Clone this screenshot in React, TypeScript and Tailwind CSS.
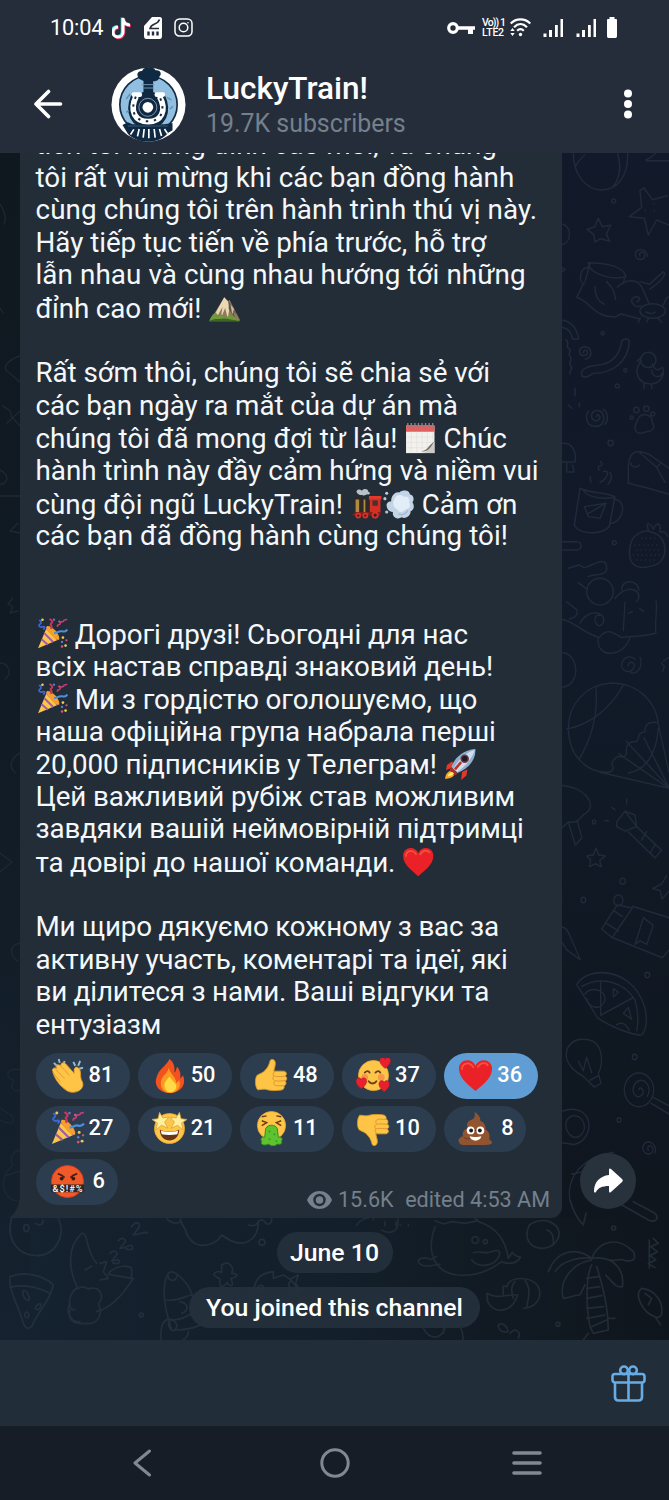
import type { ReactNode } from "react";

type EmojiName =
  | "mountain" | "calendar" | "train" | "wind" | "party" | "rocket" | "heart" | "clap" | "fire"
  | "up" | "down" | "love" | "star" | "sick" | "poop" | "angry";

const thumb = (
  <g stroke="#d99a2b" strokeWidth="0.9" strokeLinejoin="round">
    <path d="M3 18c2-2 6-2 9-6 3-3 4-7 4.500-9 .6-2.500 5-2 5.400 1.500.3 3-1 6-1.600 9H30c4 0 4 4 2 5 2.500 1.300 2 4.500 0 5.200 1.600 1.600 1 4.400-1.200 5 .8 2-.5 4-3 4.300-5 .7-11 .7-15-.6-3-1-6 .3-9 .3C.8 29 1 21 3 18z" fill="#fdc445" />
    <path d="M22 14c-2 .5-3 2-2 4 1 1.500 9 1.200 12 .6M20.500 18.500c-2 1.500-1 4.700 1 5 3 .4 8 .3 11-.5M21 24c-1.300 1.500-.6 3.700 1 4.200 2.500.6 6 .5 9 0" fill="none" stroke="#d9912a" />
  </g>
);

const face = <circle cx="18" cy="18" r="15.500" fill="#fdc649" stroke="#eda52e" strokeWidth="0.8" />;
const tinyHeart = "M0 5C-7 0-5-5-2-5-.8-5 0-4 0-3 0-4 .8-5 2-5 5-5 7 0 0 5z";
const starPath = "M0-7 2-2 7-2 3 1.500 5 7 0 3.800-5 7-3 1.500-7-2-2-2z";

const art: Record<EmojiName, ReactNode> = {
  mountain: (
    <>
      <path d="M2 32 18 6l3 5 3-2 12 23z" fill="#8d7a5c" />
      <path d="M18 6 8 24l3 2 5-9-2 13 5-12 3 12 2-13-2-7z" fill="#e9d8b2" />
      <path d="m23 10 9 15-4-3 2 7-7-10z" fill="#5c564c" />
      <path d="m25 14 2 11 2-6z" fill="#d4bd92" />
      <path d="M1 33c2-6 5-9 8-10l1 5 5-3 3 4 7-3 4 2 7 5z" fill="#6f9a3a" />
      <path d="M1 33c5-4 10-2 14-3s12 1 21 3z" fill="#3f6427" />
    </>
  ),
  calendar: (
    <>
      <path d="M2 4h32v31H2z" fill="#f3f1ee" />
      <path d="M2 4h32v7H2z" fill="#e0605f" />
      <path d="M4 1v5M8 1v5M12 1v5M16 1v5M20 1v5M24 1v5M28 1v5M32 1v5" stroke="#8e8485" strokeWidth="1.500" />
      <path d="M2 17h32M2 23h32M2 29h24M8 11v24M14 11v24M20 11v24M26 11v18M32 11v13" stroke="#e2dedb" strokeWidth="0.700" />
      <path d="M18 35c7 0 11-5 16-12v12z" fill="#cdcac6" />
      <path d="M19 33c8-1 7-6 15-11-5 8-7 12-15 11z" fill="#77736f" />
    </>
  ),
  train: (
    <>
      <path d="M8 6c-3-3 2-6 5-3 2-3 8-2 7 1 3 1 3 4-1 3-3 2-9 2-11-1z" fill="#b9c0c7" />
      <path d="M7 8h7v6H7z" fill="#2d2b29" />
      <path d="M4 13h19v15H4z" fill="#2b2a28" />
      <path d="M6 13h4v15H6zM15 13h2v15h-2z" fill="#b28b42" />
      <path d="M21 9h14v4H21z" fill="#e23a2c" />
      <path d="M22 12h12v16H22z" fill="#d52f25" />
      <path d="M25 14h6v6h-6z" fill="#453032" />
      <path d="m1 31 5-4h28v4z" fill="#7e211d" />
      <circle cx="9" cy="31" r="3.300" fill="#d83027" /><circle cx="17" cy="31" r="3.300" fill="#d83027" /><circle cx="28" cy="30.500" r="4" fill="#d83027" />
      <circle cx="9" cy="31" r="1.300" fill="#401c1c" /><circle cx="17" cy="31" r="1.300" fill="#401c1c" /><circle cx="28" cy="30.500" r="1.800" fill="#401c1c" />
    </>
  ),
  wind: (
    <>
      <path d="M5 18c3-4 4-2 5-3 0-7 5-11 9-10 5-4 12-2 12 2 5 1 5 7 3 9 3 5 1 9-2 10 0 6-6 9-10 7-5 3-11 0-10-6-4 0-8-4-7-9z" fill="#c3d4e7" />
      <path d="M14 12c2-5 8-5 10-2 5-2 8 3 6 6 3 4 0 8-4 8-2 4-8 4-9 0-5-2-6-8-3-12z" fill="#e3edf7" />
      <path d="M18 29c3 2 9 1 11-4" stroke="#a4b8cf" strokeWidth="1.300" fill="none" />
      <circle cx="3" cy="12" r="1.800" fill="#b2c5db" /><circle cx="5" cy="6" r="1.700" fill="#c1d1e3" /><circle cx="5" cy="27" r="1.800" fill="#b2c5db" />
    </>
  ),
  party: (
    <>
      <path d="M2 34 12 10c4 0 13 8 14 14z" fill="#fbc64a" />
      <path d="m9 17 10 10M6 24l7 6M11.500 11 24 24.500" stroke="#a15aa8" strokeWidth="2.200" />
      <path d="M12 9c5-1 14 8 14 14-2 3-6 0-9-4s-7-7-5-10z" fill="#f6a029" />
      <path d="M3 3c3-1 3 3 1 4s0 4 3 3 3 1 1 3" stroke="#3868d3" strokeWidth="2" fill="none" />
      <path d="M20 17c5 0 5-3 9-2s5-1 6-2" stroke="#4c8ee3" strokeWidth="2.300" fill="none" />
      <path d="M24 10c-1-4 3-1 3-4s4-1 4-3 4 0 3-2" stroke="#c33e77" strokeWidth="1.800" fill="none" />
      <path d="M16 12c4-3-2-4 1-6s-1-4-2-5" stroke="#c6375d" strokeWidth="2.200" fill="none" />
      <g fill="#f4c94b"><circle cx="7" cy="2" r="1.500" /><circle cx="30" cy="22" r="1.500" /><circle cx="33" cy="31" r="1.500" /></g>
      <g fill="#df547d"><circle cx="26" cy="4" r="1.300" /><circle cx="29" cy="32" r="1.400" /><circle cx="34" cy="25" r="1.200" /></g>
      <g fill="#5d7bd8"><circle cx="20" cy="2" r="1.300" /><circle cx="29" cy="27" r="1.300" /></g>
    </>
  ),
  rocket: (
    <>
      <path d="m9 15-6 4-1 6 9-4zM20 27l-1 9 6-5 1-7z" fill="#de392b" />
      <path d="M9 25c-6 1-8 6-8 10 4-1 9-1 11-6z" fill="#f6a72c" />
      <path d="M8 22c2-9 12-20 27-21 1 13-9 23-20 27z" fill="#8fb0d0" />
      <path d="M10 23C16 14 23 6 34 2c0 5-9 18-19 25z" fill="#cfdeec" />
      <path d="m8 21 7 8-4 2-5-6z" fill="#b42c27" />
      <circle cx="23" cy="12" r="4.800" fill="#7b3138" /><circle cx="23" cy="12" r="3" fill="#191b2c" />
      <path d="m12 24 7-8" stroke="#b53633" strokeWidth="3" />
      <path d="M4 32c1-4 4-5 5-5l2 2c-2 2-4 2-7 3z" fill="#fff077" />
    </>
  ),
  heart: (
    <>
      <path d="M18 34C13 29 1 22 1 11 1 1 14-1 18 8c4-9 17-7 17 3 0 11-12 18-17 23z" fill="#ea2227" />
      <path d="M4 12c0-7 8-9 12-2M20 10c3-6 9-6 11-2" stroke="#f7523f" strokeWidth="1.800" fill="none" />
    </>
  ),
  clap: (
    <>
      <path d="M4 5 7 8M9 1l1 4M15 3l-1 4M24 4l2 4M31 3l-2 5M34 10l-4 1" stroke="#9ab9ce" strokeWidth="2" />
      <path d="M3 14c-2-3 2-5 4-3-2-4 1-5 4-3 0-4 4-4 6-1l8 9c-1-5 1-8 4-6 4 3 1 9 4 14 4 8-7 14-15 10C11 30 4 21 3 14z" fill="#fdc445" stroke="#e39a2b" strokeWidth="0.900" />
      <path d="m6 12 9 9M11 8l9 10M3 15l8 10" stroke="#e39d32" fill="none" strokeWidth="1" />
    </>
  ),
  fire: (
    <>
      <path d="M18 1c-4 8-10 9-13 18-4 10 4 17 13 17s18-6 14-18c-2 2-3 3-3 3 1-6-1-9-3-12-2 3-1 5-3 6 1-6-1-11-5-14z" fill="#f4511e" />
      <path d="M17 10c0 6-8 8-8 16 0 7 5 10 10 10s12-4 9-13l-3 3c0-6-5-8-8-16z" fill="#fb9c20" />
      <path d="M18 19c-3 4-6 6-5 11 2 8 12 6 12-1 0-3-3-4-7-10z" fill="#ffdc45" />
    </>
  ),
  up: thumb,
  down: <g transform="matrix(1 0 0 -1 0 37)">{thumb}</g>,
  love: (
    <>
      {face}
      <path d="M9 15c2-2 4-2 5 0M20 15c2-2 4-2 5 0M13 24c2 3 6 3 8 0" stroke="#694018" strokeWidth="1.900" fill="none" strokeLinecap="round" />
      <circle cx="9" cy="20" r="3.500" fill="#f38647" opacity=".75" /><circle cx="26" cy="20" r="3.500" fill="#f38647" opacity=".75" />
      <g fill="#e71f2e" stroke="#ad1622" strokeWidth=".4">
        <path d={tinyHeart} transform="translate(30 5) scale(1.150)" /><path d={tinyHeart} transform="translate(5.500 26) scale(1.150)" /><path d={tinyHeart} transform="translate(29 29) scale(1.150)" />
      </g>
    </>
  ),
  star: (
    <>
      {face}
      <path d="M8 19c5 3 15 3 20 0 0 15-20 15-20 0z" fill="#663516" />
      <path d="M9 20c5 2 13 2 18 0l-1 4c-5 1-11 1-16 0z" fill="#fff" />
      <g fill="#ffee9c" stroke="#dfa02e" strokeWidth=".6">
        <path d={starPath} transform="translate(9 10) rotate(-8) scale(1.250)" /><path d={starPath} transform="translate(27 10) rotate(8) scale(1.250)" />
      </g>
    </>
  ),
  sick: (
    <>
      <circle cx="18" cy="15" r="14.500" fill="#fdc649" stroke="#eda52e" strokeWidth="0.800" />
      <path d="m8 10 5 2-5 3M28 10l-5 2 5 3M8 6l5-1M28 6l-5-1" stroke="#693c16" strokeWidth="1.500" fill="none" />
      <path d="M12 18c3-5 10-4 12 0l1 9c4-1 5 3 3 4 2 2-1 4-4 3-3 3-7 2-9 0-4 2-9 1-7-3-2-2 0-5 3-4z" fill="#5fc32f" stroke="#2f8a28" strokeWidth="1" />
      <g fill="#2f9928"><circle cx="16" cy="21" r="1" /><circle cx="21" cy="24" r="1" /><circle cx="16" cy="29" r="1" /><circle cx="23" cy="31" r="1" /></g>
    </>
  ),
  poop: (
    <>
      <path d="M17 1c5 3 6 6 6 9 5 2 6 7 5 9 5 2 5 8 4 10 6 4 2 6-3 6H6c-6 0-8-7-1-9-1-4 2-8 5-8-2-6 1-8 4-9 3-1 4-4 3-8z" fill="#925331" />
      <path d="M11 18c5 3 11 3 15-1M6 27c2 2 5 2 7 1" stroke="#6b3824" strokeWidth="1" fill="none" />
      <circle cx="13" cy="20" r="4" fill="#fff" /><circle cx="23" cy="20" r="4" fill="#fff" />
      <circle cx="13.500" cy="20" r="2" fill="#221c1c" /><circle cx="22.500" cy="20" r="2" fill="#221c1c" />
      <path d="M12 26c3 1 9 1 12 0-1 6-11 6-12 0z" fill="#fff" />
    </>
  ),
  angry: (
    <>
      <circle cx="18" cy="18" r="16.500" fill="#f05a28" stroke="#d83e1e" />
      <path d="M8 10c3 1 5 2 7 4M28 10c-3 1-5 2-7 4" stroke="#4b2019" strokeWidth="1.900" />
      <circle cx="12" cy="15" r="2" fill="#381f19" /><circle cx="24" cy="15" r="2" fill="#381f19" />
      <path d="M1 21h34v8H1z" fill="#2e2524" />
      <text x="18" y="28.300" textAnchor="middle" fontSize="9.500" fontWeight="500" fill="#fff" textLength="31" fontFamily="Roboto, sans-serif">&amp;$!#%</text>
    </>
  ),
};

function Emoji({ name, className }: { name: EmojiName; className: string }) {
  return <svg viewBox="0 0 36 36" className={className} aria-hidden="true">{art[name]}</svg>;
}

function InlineEmoji({ name }: { name: EmojiName }) {
  return <Emoji name={name} className="inline-block h-[32px] w-[32.500px] shrink-0 align-[-6px]" />;
}

const lines: { text: ReactNode; tracking?: string }[] = [
  { text: "tiến tới những đỉnh cao mới, và chúng" },
  { text: "tôi rất vui mừng khi các bạn đồng hành" },
  { text: "cùng chúng tôi trên hành trình thú vị này.", tracking: "tracking-[0.080px]" },
  { text: "Hãy tiếp tục tiến về phía trước, hỗ trợ", tracking: "tracking-[-0.040px]" },
  { text: "lẫn nhau và cùng nhau hướng tới những", tracking: "tracking-[0.090px]" },
  { text: <>đỉnh cao mới! <InlineEmoji name="mountain" /></>, tracking: "tracking-[-0.150px]" },
  { text: "" },
  { text: "Rất sớm thôi, chúng tôi sẽ chia sẻ với", tracking: "tracking-[-0.070px]" },
  { text: "các bạn ngày ra mắt của dự án mà", tracking: "tracking-[-0.080px]" },
  { text: <>chúng tôi đã mong đợi từ lâu! <InlineEmoji name="calendar" /> Chúc</> },
  { text: "hành trình này đầy cảm hứng và niềm vui" },
  { text: <>cùng đội ngũ LuckyTrain! <InlineEmoji name="train" /><InlineEmoji name="wind" /> Cảm ơn</> },
  { text: "các bạn đã đồng hành cùng chúng tôi!", tracking: "tracking-[0.060px]" },
  { text: "" },
  { text: "" },
  { text: <><InlineEmoji name="party" /> Дорогі друзі! Сьогодні для нас</>, tracking: "tracking-[-0.110px]" },
  { text: "всіх настав справді знаковий день!", tracking: "tracking-[-0.160px]" },
  { text: <><InlineEmoji name="party" /> Ми з гордістю оголошуємо, що</>, tracking: "tracking-[-0.080px]" },
  { text: "наша офіційна група набрала перші", tracking: "tracking-[-0.140px]" },
  { text: <>20,000 підписників у Телеграм! <InlineEmoji name="rocket" /></>, tracking: "tracking-[-0.080px]" },
  { text: "Цей важливий рубіж став можливим", tracking: "tracking-[-0.140px]" },
  { text: "завдяки вашій неймовірній підтримці", tracking: "tracking-[-0.160px]" },
  { text: <>та довірі до нашої команди. <InlineEmoji name="heart" /></>, tracking: "tracking-[-0.200px]" },
  { text: "" },
  { text: "Ми щиро дякуємо кожному з вас за", tracking: "tracking-[-0.200px]" },
  { text: "активну участь, коментарі та ідеї, які", tracking: "tracking-[-0.200px]" },
  { text: "ви ділитеся з нами. Ваші відгуки та", tracking: "tracking-[-0.190px]" },
  { text: "ентузіазм", tracking: "tracking-[-0.300px]" },
];

const reactions: { name: EmojiName; count: number; chosen?: boolean }[] = [
  { name: "clap", count: 81 }, { name: "fire", count: 50 }, { name: "up", count: 48 },
  { name: "love", count: 37 }, { name: "heart", count: 36, chosen: true },
  { name: "party", count: 27 }, { name: "star", count: 21 }, { name: "sick", count: 11 },
  { name: "down", count: 10 }, { name: "poop", count: 8 }, { name: "angry", count: 6 },
];

function Wallpaper() {
  return (
    <svg className="absolute inset-0 h-full w-full" viewBox="0 0 669 1187" fill="none" stroke="#202a3a" strokeLinecap="round" strokeLinejoin="round" aria-hidden="true">
      <g transform="translate(540 -3) scale(.3333)" strokeWidth="4.500">
        <path d="M100 10c0 60 35 110 85 110s80-45 78-110M105 50c10-15 15-25 30-35M218 112c25-30 25-70 15-100M318 30c15-5 20-12 30-22M318 32h69" />
        <path d="m300 122 12-8 25 35 45-12M300 122l5 50-37 28 45 5 12 50 25-45 37 15M316 180v2M343 182v2M342 160v1" />
        <path d="m175 205 12 25 25-5-13 27 10 22-27-8-17 10-4-23-20-15 23-7zM66 222c30 5 30 55 0 62M66 352l9 6-9 7" />
        <path d="M300 318c-5-10 10-18 14-5 4 18-25 22-28 2 0-24 35-22 36 4M145 338c50 0 105 10 113 42-50 15-115-15-113-42zM150 340l-15 55M255 380l-5 20M143 352c-27 5-27 45-10 50M130 402l-20 40c40 10 55 65 118 58l15-8 57 15M165 410c0 30 10 45 28 53M200 395c25 25 22 35 27 53M232 412c25-25 65-30 78 10l18 40M300 395l28 8 42-38c10 5 0 25-40 52" />
        <ellipse cx="338" cy="483" rx="38" ry="22" /><path d="M318 486c10 6 20 6 28 0M300 505l-5 12M325 506l-5 10M355 505l10 12M303 468c-25 10-40-25-15-28 15 0 13 12 3 16M370 466c8-20 10-25 17-25" />
        <path d="M66 510c30 5 45 25 50 57h-18c-5-20-10-30-32-35M78 570c15 8-5 18 8 25s-6 14 4 24-8 18 2 28-8 16-2 26M105 715v22M85 765l10 10M118 760v10" />
        <path d="M130 608c0-10 12-10 12 0s-20 14-23-1 20-25 32-7c5 15-3 28-15 27M245 575c5-12 22-10 23 0-3 60-50 95-108 95-15 10-25 15-35 8-8-30 40-30 65-35 35-10 50-35 55-68z" />
        <circle cx="325" cy="630" r="23" /><path d="m302 625-10 7 10 5c-25 30-5 65 30 65 30 0 45-30 35-50-15 15-25 5-30-10M312 702v14M335 702v14M335 660c0 25 30 25 32 8" />
        <path d="M170 800c0-10 12-5 9 5-8 14-27 6-24-12 5-14 24-16 33-2 10 24-5 40-22 38-28 0-32-32-20-45M190 778c15 8 15 35 5 45" />
        <path d="M285 830c10-30 15-40 35-35 22 5 12 20 22 35-5 18-17 12-28 17-20 8-30-2-29-17z" /><circle cx="275" cy="803" r="5" /><circle cx="289" cy="780" r="8" /><circle cx="319" cy="776" r="8" /><circle cx="338" cy="792" r="6" /><circle cx="212" cy="879" r="8" /><circle cx="188" cy="550" r="5" /><circle cx="256" cy="661" r="5" /><circle cx="232" cy="708" r="6" /><circle cx="223" cy="1178" r="6" /><circle cx="221" cy="153" r="6" />
        <path d="M66 880c30-4 45 25 39 56H66M80 936v30h22l-4-20M265 1000v-55c5-50 35-45 65-30l57 40M265 1000l60 15 60 17M298 907l52 45 10-10M350 952l25 45M273 940c0 12 18 15 25 5M120 1015l-17 110c15 30 80 30 105 5l17-90c-35-15-70-8-105-25zM130 1022c20 25 65 25 92 20M220 1048c45 0 30 70-8 72M133 1070l65-10-18 45-35-5-12-30zM145 1090l50-28M182 935c15 20-15 5-5 25M190 965c20-10 15 20-10 32M210 968c10 15 0 28-6 35M150 980l3 18" />
        <path d="M270 1190c5-35 40-55 65-43 50 10 55 85 5 100-40 12-80 8-70-57zM325 1140c-10-30 10-18 15-2 10-28 25-15 20 8 15-3 22 5 23 14M66 1175h45c15 2 18 22 0 25H66M85 1255l32-10 15 8c35-10 65-35 68 0 2 28-40 18-55 27" /><circle cx="180" cy="1325" r="40" /><path d="M245 1320c0-35 50-30 52 0M225 1345c40-50 90-20 65 10M115 1298l27 20" />
        <g strokeDasharray="1 12"><path d="M285 1185h75M290 1200h70M280 1215h80M290 1230h55M305 1165h50" /></g>
      </g>
      <g transform="translate(540 447) scale(.3333 .3827)" strokeWidth="4">
        <path d="M66 50c45 10 60 35 112 48 20-25 40-15 65 0 30-5 65 0 105-12-5-25 5-55 0-86M175 98c-10 55 75 55 95 0M80 5l30 20c5 10 0 20-22 25M120 60c30-40 80-30 70 0-20 25-40-25-10-20M255 5l-5 75M265 35l12-5M310 30l-12-8" />
        <path d="M265 172c0-14 20-12 18 2-10 22-40 12-38-6 5-20 25-25 40-13M300 150c10 20-5 45-28 40M66 138c50 0 60 85 0 90M370 160l17-10M365 165l8 8-5 14" />
        <path d="M210 450c-70 5-125-45-125-115 0-65 55-115 130-118 80 0 135 50 140 108M355 335c-5 55-30 110-90 117M168 230c5 60-5 120-50 185M80 337c65-10 130-50 170-115M210 450c25-15-10-20 15-35 10-15 30 5 35-15-5-20 5-30 30-30 10-10 0-25 25-25 0-20 10-28 35-25M180 450l207 42-150-90M260 370l127 120-75-130M355 325l32 125" />
        <path d="M66 485c65 5 105 45 75 70-25 10-20 30-55 25l-20 15M86 583l20 58 20-20-15-45" />
        <path d="m230 580 25-28 30 10 5 30-35 12-25-12zM255 552l35 40M290 592l75 62-20 20-80-68M320 605l-15 22M345 640l-15 22M260 520v13M195 577h12M215 542l10 6" />
        <path d="m168 648 8 18 20 3-17 12 5 16-18-8-18 8 4-18-12-10 20-3zM66 855c15 0 20 15 25 25l30 60-40-25-15-20M380 720l-15 22-27 12 23 6 5 22 20-20M210 825l22-28 45 8M210 825l-25 35 32 22 60-77M200 845l35 20M222 812l25 15M277 800l110 30M217 882l150 53 20-20M285 900l25-70 30 20-20 50-20-10z" /><circle cx="235" cy="785" r="14" />
        <path d="M110 1005c35-50 150-40 190 30 30 45 20 105-2 102-50-7-110-35-125-45zM125 1010c60-30 130-10 160 35 10 30 10 60 5 80M182 995v90l95-45M135 1030c10-20 60-15 60 12-5 30-45 30-55 0M220 1015l15 10-15 12zM250 1080l15-15 10 30zM230 1110c20-10 30 0 38 15" />
        <path d="M130 1245c-85-40-50-100 0-97 65 0 60 65 45 90l8 25-20 10zM115 1205l15 25 10-35 15 40M150 1255l25-12" />
        <circle cx="297" cy="1280" r="44" /><path d="M297 1280c0-12 20 0 10 12-18 18-40-10-20-30s52 5 35 35M340 1300l47 22M333 1315l54 28M68 1335c90-25 105 70 35 88l-37-5M80 1360c15-25 60-10 52 25-18 40-65 10-52-25M325 1438c-8-12 12-18 14-3 0 20-35 15-30-8 12-24 45-5 36 18M90 1568c-10-45 20-110 130-125M95 1500l90-15" />
        <circle cx="162" cy="580" r="5" /><circle cx="248" cy="735" r="8" /><circle cx="130" cy="784" r="7" /><circle cx="322" cy="980" r="7" /><circle cx="284" cy="1194" r="7" /><circle cx="237" cy="1359" r="6" />
      </g>
      <g transform="translate(0 1047) scale(.3333)" strokeWidth="5" stroke="#22303d">
        <path d="M35 55c-20 70 25 112 75 112 55 0 90-60 65-112M72 90c-5-20 15-20 15-8s-10 18-15 8zM108 70c12 10 25 0 20-10" />
        <path d="M30 230c35-15 95-10 130 25-8 45-50 85-65 125-20 15-25-10-35-40-15-40-35-80-30-110zM30 262c40-10 75-5 120 18M68 275c10-10 20 8 20 25-10 5-20-10-20-25zM75 340c5-10 15 0 10 12-12 3-12-5-10-12zM105 325c5-12 12-15 18-12 0 12-10 22-18 12z" />
        <path d="M245 100c-50 45-35 120-12 165M245 100c20-5 10 50 45 90M255 210l20-12M300 190l20-5-10 30 15 20-25 5M330 215c25-20 55-20 65-10v30l-70-12zM400 235c-35 55-70 90-110 100M225 330c-30 0-15-65 10-65 20-15 30 10 35 0 40-5 40 35 25 45 20 45-15 65-35 60-35 5-60-10-50-40M210 310c-15 25 5 60 30 55M330 160c15-15 25 0 20 5l-15 18c10 0 20-8 23 0s-10 10-20 5M355 122c15-15 25 0 20 5l-15 18c15 0 35-15 38-5s-10 12-22 5M395 80c15-20 30-10 20 5l-15 20c20 0 35-15 42-5" />
        <path d="M500 57c25 20 30 10 40 10 5-20-5-10 15 20 20 70 90 55 110 18 65 50 110 15 110-40 20-20 20 25 40 0v-10M665 105l25 15M745 75c15 5 25 0 30-10" /><circle cx="786" cy="127" r="9" /><circle cx="424" cy="345" r="6" />
        <path d="M515 390c-25-75-30-135-10-170 15-20 70 35 75 80M500 300c30 5 50-10 75-15M505 230c0 15 25 15 25-2M485 430c-15-100 50-75 45-50-10 35-40-15-15-20 30 0 80-20 130-80M520 390c60 0 85-15 105-30M540 305c25 5 30 25 5 35M530 430c25-10 35-20 35-35M665 195c20-15 40 5 30 25 30 0 10 15-3 15 15 30-5 25-10 12-15 20-25 15-22-10-35-15-10-25 5-20zM760 280c5-50 25-60 60-65v20l30-10c65 30 70 130-20 153M875 235l20-10-8 25 13 20-20 5-15-20zM775 260c10-10 20 0 12 10-10 5-15-3-12-10" />
      </g>
      <g transform="translate(400 1047) scale(.3333)" strokeWidth="5" stroke="#222c36">
        <path d="M105 80c-30 85 5 140 70 145 50 5 90-10 130-40 25 10 45 5 57-13-15-5-20-5-25-15l-12 18c-10-65-45-95-85-108l-15-12M110 170c-10 0-10 15-25 5-30-5-40 10-20 20 25 10 45-5 55-2M215 180c20 25 70 20 82-12 10-30-25-10-35-10s-30-5-42 0M105 62l25 10 25-7 40 5 40-8M0 75h3M25 73v5" /><circle cx="226" cy="120" r="10" /><circle cx="256" cy="125" r="6" />
        <path d="M388 75c-20 45 5 70 40 70 50-5 65-55 30-75-15-12-45-12-70 5zM440 90c20 5 20 25 20 40M510 0c10 35 20 55 40 75l8-35M640 0l105 60c20 10 35-5 20-20L700 5M760 115l15 15-23 10 20 15-22 12 17 12-22 12 20 12M748 120v85M725 265c45 5 65 45 60 75 0 10-10 15-20 10-35-10-65-65-40-85zM765 350l17 25M735 280l20 15-10 20" />
        <path d="M445 215c25-65 85-75 130-40 20-50 75-70 125-20 15 30-15 30-30 25-5-5-30 5-40 0M575 175c-30-5-90 5-110 40M575 175c70-10 100 40 92 85-20 5-30-15-50-35M575 180c-60 10-100 65-85 115 20 0 25-10 50-10l15-30M575 195c-20 40-15 135-5 185l10 20 45-10c0-60-15-130-35-190M560 235l35-5M560 265l40-5M560 295l45-8M560 325l50-5M560 355l55-10M575 380l45-20M625 355h20M565 400l-15 20M320 260c10-35 75-30 95 0 15 35-10 65-45 65M320 260c-15-5-10-5-10 25M345 245c-15 15-10 35-5 50M375 240c20 30 10 55 5 80M260 280c35 20 65 0 93 5-20 60-75 55-90 20zM295 375c15-12 30 10 28 20-20 5-30-10-28-20M330 400c15-20 35-5 25 15" /><circle cx="474" cy="373" r="6" /><circle cx="641" cy="84" r="6" />
        <path d="M120 275c20 20 15 85 10 125M70 385c20 35 50 35 65 0M182 385c7 10 8 30 5 40M-130 75c20-30 45-15 60-35 25-10 80-10 60 45-10 15-30 15-45 5M-80 60v-10M-45 65v12M-12 65v12" />
      </g>
      <g stroke="#1c2833" strokeWidth="1.400">
        <path d="M0 51c5 8 7 14 4 20M0 155l3 5M20 203c-10 3-18 10-13 15l13 11M3 253c6 5 8 2 8 10l9 10M7 270l13-12M0 317c8 4 9 10 3 14H0M0 343h20M18 370l-8 8 10 2M13 445l-5 6 5 3-3 6 8-2M0 510c8 0 13 10 5 16M20 600c-8 4-13 14-4 20M0 700l12 9-12 10M20 790c-12 2-10 14-2 18M20 917c-15-4-15 10-6 10-6 10 3 12 6 10M0 955l12 8c5 8-3 9-12 4M20 997c-10 2-10 12-7 15-18 15-8 38 7 36M5 1023l15-5" />
      </g>
    </svg>
  );
}

function StatusBar() {
  return (
    <div className="flex h-[55px] items-center pl-[50px] text-white">
      <span className="w-[62px] text-[21.800px] leading-none tracking-[-0.200px]">10:04</span>
      <svg className="h-[24px] w-[20px]" viewBox="0 0 20 24" fill="none" strokeWidth="3" aria-label="TikTok">
        <path d="M11 2v14a5 5 0 1 1-5-5M11 3c1 4 3 6 7 6" stroke="#25d6d0" transform="translate(-.8 -.6)" />
        <path d="M11 2v14a5 5 0 1 1-5-5M11 3c1 4 3 6 7 6" stroke="#e72f5b" transform="translate(.8 .8)" />
        <path d="M11 2v14a5 5 0 1 1-5-5M11 3c1 4 3 6 7 6" stroke="#fff" />
      </svg>
      <svg className="ml-[12px] h-[22px] w-[18px]" viewBox="0 0 18 22" aria-label="SIM">
        <path d="M8 0h8c1 0 2 1 2 2v17c0 2-1 3-2 3H2c-1 0-2-1-2-3V9z" fill="#fff" />
        <path d="M15.500 2.500c-2 6-8 3-9.500 9h9" fill="none" stroke="#262d3a" strokeWidth="1.600" /><path d="M4.500 14.500v4M9 14.500v4M13.500 14.500v4" stroke="#262d3a" strokeWidth="2.400" />
      </svg>
      <svg className="ml-[12px] h-[19px] w-[19px]" viewBox="0 0 19 19" fill="none" stroke="#fff" strokeWidth="1.500" aria-label="Instagram">
        <rect x="1" y="1" width="17" height="17" rx="4.500" /><circle cx="9.500" cy="9.500" r="4.300" /><circle cx="14" cy="4.800" r=".8" fill="#fff" stroke="none" />
      </svg>
      <svg className="ml-[254px] h-[14px] w-[28px]" viewBox="0 0 28 14" aria-label="VPN">
        <circle cx="6" cy="7" r="4.300" fill="none" stroke="#fff" strokeWidth="3.200" /><path d="M11 5.200h17v3.600h-2V13h-5V8.800H11z" fill="#fff" />
      </svg>
      <span className="ml-[7px] flex w-[23px] flex-col text-[10.500px] leading-[10px] font-medium whitespace-nowrap">
        <span className="tracking-[-0.900px]">Vo)) 1</span><span className="tracking-[-0.200px]">LTE2</span>
      </span>
      <svg className="ml-[5px] h-[19px] w-[21px]" viewBox="0 0 21 19" fill="none" stroke="#fff" strokeWidth="2.200" aria-label="Wi-Fi">
        <path d="M.7 5.500C6 0 15 0 20.300 5.500M4 9.200c4-4 9-4 13 0M7.200 12.700c2-2 4.600-2 6.600 0" /><circle cx="10.500" cy="16.500" r="1.700" fill="#fff" stroke="none" /><path d="m.3 13 2.200-3 2.200 3zM.3 15l2.200 3 2.200-3z" fill="#fff" stroke="none" />
      </svg>
      {[0, 1].map((n) => (
        <svg key={n} className="ml-[12px] h-[18px] w-[21px]" viewBox="0 0 21 18" fill="#fff" aria-label="Signal">
          <path d="M.5 14.500h3V18h-3zM6 11h3v7H6zM12 6h2.800v12H12zM17.500 0h2.500v18h-2.500z" />
        </svg>
      ))}
      <svg className="ml-[10px] h-[21px] w-[10px]" viewBox="0 0 10 21" aria-label="Battery"><path d="M2.500 0h5v2H9c.6 0 1 .5 1 1v16c0 1-.6 2-1.500 2h-7C.6 21 0 20 0 19V3c0-.5.4-1 1-1h1.500z" fill="#fff" /></svg>
    </div>
  );
}

function Avatar() {
  return (
    <svg className="mt-[2px] ml-[48px] h-[76px] w-[75px]" viewBox="333 204 224 228" aria-label="LuckyTrain">
      <circle cx="445" cy="317" r="111" fill="#fff" />
      <circle cx="445" cy="317" r="86" fill="#91bfdf" stroke="#152b43" strokeWidth="5" />
      <path d="M367 378 383 370l14 6h96l24-4v22l-14 8c-12 16-32 26-58 26s-50-10-62-24z" fill="#102943" />
      <path d="M418 240c-15-18 0-25 8-24 3-15 35-15 40-2 20 0 18 15 10 20 5 10-15 15-17 12v40h-29v-40z" fill="#102943" />
      <path d="M424 257h38M430 267h30" stroke="#7297b4" strokeWidth="3" />
      <circle cx="444" cy="325" r="48" fill="#102943" />
      <path d="M405 293c-20 50 0 82 39 82s60-35 38-82" fill="none" stroke="#102943" strokeWidth="26" />
      <path d="M408 292c-22 45-2 76 36 76s58-32 34-76" fill="none" stroke="#fff" strokeWidth="17" />
      <path d="M401 287h18M470 287h18" stroke="#fff" strokeWidth="14" strokeLinecap="round" />
      <path d="M407 293c-19 45-2 74 37 74s54-32 34-74" fill="none" stroke="#102943" strokeWidth="6" strokeDasharray="7 17" />
      <circle cx="443" cy="325" r="27" fill="#102943" stroke="#b9ccda" strokeWidth="2" /><circle cx="443" cy="325" r="16" fill="#fff" />
      <path d="M383 381h120" stroke="#365672" strokeWidth="3" />
      <path d="m401 391-10 16M417 390l-5 22M432 390l-3 26M446 390v28M462 390l3 26M478 390l6 21M493 390l9 14" stroke="#fff" strokeWidth="5" />
      <path d="m378 300 12-15M500 295l14 8M510 330l8-8M378 340l8-5" stroke="#5c8fb3" strokeWidth="4" />
    </svg>
  );
}

export default function App() {
  return (
    <div className="flex h-[1500px] w-[669px] flex-col overflow-hidden bg-[#262d3a] font-[Roboto,'Noto_Sans',sans-serif]">
      <header className="h-[153px] shrink-0">
        <StatusBar />
        <div className="flex h-[98px] items-center pl-[33px]">
          <svg className="h-[30px] w-[30px]" viewBox="0 0 30 30" fill="none" stroke="#fff" strokeWidth="3.600" strokeLinecap="round" strokeLinejoin="round" aria-label="Back"><path d="M27.500 15H3M15.500 2.500 3 15l12.500 12.500" /></svg>
          <Avatar />
          <div className="mt-[3px] ml-[20px] w-[417px] whitespace-nowrap">
            <h1 className="text-[31.500px] leading-[36px] font-medium text-white">LuckyTrain!</h1>
            <p className="text-[24.900px] leading-[33px] text-[#75808d]">19.7K subscribers</p>
          </div>
          <svg className="h-[30px] w-[10px]" viewBox="0 0 10 30" fill="#fff" aria-label="Menu"><circle cx="5" cy="4.500" r="4" /><circle cx="5" cy="15" r="4" /><circle cx="5" cy="25.500" r="4" /></svg>
        </div>
      </header>

      <main className="relative h-[1187px] shrink-0 overflow-hidden bg-linear-to-r from-[#15222f] via-[#131f2a] to-[#0f151c]">
        <div className="absolute inset-y-0 left-0 w-[30px] bg-linear-to-b from-[#10181f] via-[#111b25] to-[#15222f]/0" />
        <div className="absolute top-0 right-0 h-[1065px] w-[108px] bg-linear-to-b from-[#11192a] via-[#111a28] to-[#0f161e]" />
        <Wallpaper />
        <div className="relative flex h-[1065px] items-end">
          <svg className="h-[24px] w-[20px] shrink-0" viewBox="0 0 20 24" fill="#232d38" aria-hidden="true"><path d="M20 0v24H10c0-2 10-7 10-24z" /></svg>
          <article className="flex h-[1065px] w-[542px] shrink-0 flex-col overflow-hidden rounded-br-[11px] bg-[#232d38] pl-[15.500px]">
            <div className="mt-[-24px] text-[27.800px] leading-[32.600px] text-[#f4f8fb]">
              {lines.map(({ text, tracking }, i) => <p key={i} className={`h-[32.600px] whitespace-nowrap ${tracking ?? ""}`}>{text}</p>)}
            </div>
            <div className="relative mt-[11px] flex w-[512px] flex-wrap gap-x-[8px] gap-y-[7px]">
              {reactions.map(({ name, count, chosen }) => (
                <button key={name} className={`flex h-[46px] items-center rounded-full pl-[14px] text-[21.800px] font-medium text-white ${count < 10 ? "w-[82px]" : "w-[94.200px]"} ${chosen ? "bg-[#609dd4]" : "bg-[#2c3d50]"}`}>
                  <Emoji name={name} className="h-[35px] w-[35px]" />
                  <span className={count < 10 ? "ml-[8px]" : "ml-[4px]"}>{count}</span>
                </button>
              ))}
            </div>
            <div className="mt-[-17px] mr-[12px] flex items-center justify-end text-[21.600px] leading-[24px] whitespace-pre text-[#74808c]">
              <svg className="mr-[6px] h-[18px] w-[25px]" viewBox="0 0 25 18" aria-label="Views"><path d="M0 9C5-3 20-3 25 9 20 21 5 21 0 9z" fill="#74808c" /><circle cx="12.500" cy="9" r="5" fill="none" stroke="#232d38" strokeWidth="2.500" /></svg>
              <span>15.6K</span><span className="ml-[11.500px]">edited 4:53 AM</span>
            </div>
          </article>
          <button className="mb-[9px] ml-[18px] flex h-[56px] w-[56px] items-center justify-center rounded-full bg-[#27323d]" aria-label="Share">
            <svg className="h-[26px] w-[30px]" viewBox="0 0 30 26" fill="#fff"><path d="M16 2c0-1.500 1-2 2-1l11 10c1 1 1 2 0 3L18 24c-1 1-2 .5-2-1v-5C9 18 5 20 3 24c-.6 1-2 .7-2-.5C1 14 7 8 16 7z" /></svg>
          </button>
        </div>
        <div className="relative mt-[14px] flex flex-col items-center gap-[14px] text-[24.800px] font-medium text-white">
          <span className="flex h-[41px] w-[116px] items-center justify-center rounded-full bg-[#25313c]/90 whitespace-nowrap">June 10</span>
          <span className="flex h-[41px] w-[291px] items-center justify-center rounded-full bg-[#25313c]/90 whitespace-nowrap">You joined this channel</span>
        </div>
      </main>

      <div className="flex h-[86px] shrink-0 items-center justify-end bg-[#222d3a] pr-[23px]">
        <svg className="h-[37px] w-[35px]" viewBox="0 0 35 37" fill="none" stroke="#67ace5" strokeWidth="2.600" strokeLinejoin="round" aria-label="Gift">
          <rect x="1.500" y="9" width="32" height="8.500" rx="2.500" /><path d="M4 17.500V32c0 2.500 1 3.500 3.500 3.500h20c2.500 0 3.500-1 3.500-3.500V17.500M17.500 9v26.500" /><circle cx="13" cy="5.300" r="3.800" /><circle cx="22" cy="5.300" r="3.800" />
        </svg>
      </div>
      <nav className="flex h-[74px] shrink-0 items-center bg-[#171d26] pl-[132px]">
        <svg className="h-[28px] w-[20px]" viewBox="0 0 20 28" fill="none" stroke="#838890" strokeWidth="3" strokeLinecap="round" strokeLinejoin="round" aria-label="Back"><path d="M17.500 2 3 14l14.500 12" /></svg>
        <svg className="ml-[168px] h-[30px] w-[30px]" viewBox="0 0 30 30" fill="none" stroke="#838890" strokeWidth="3" aria-label="Home"><circle cx="15" cy="15" r="13.200" /></svg>
        <svg className="ml-[162px] h-[26px] w-[30px]" viewBox="0 0 30 26" stroke="#838890" strokeWidth="3.600" strokeLinecap="round" aria-label="Recents"><path d="M2 3h26M2 13h26M2 23h26" /></svg>
      </nav>
    </div>
  );
}
